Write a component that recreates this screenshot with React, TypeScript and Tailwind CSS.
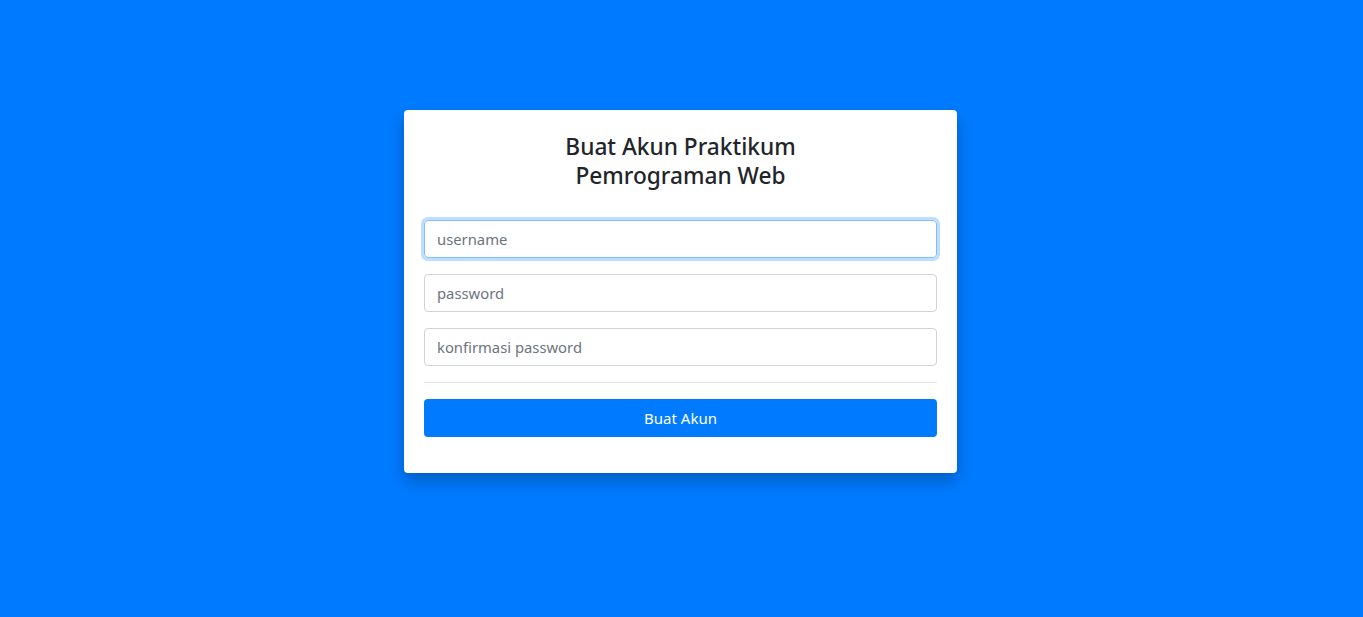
import React from 'react'

const font = { fontFamily: '"Noto Sans", "Open Sans", sans-serif' }

const App = () => {
    return (
        <div className="w-full h-[617px] bg-[#007bff] flex justify-center pt-[110px] pr-[2px]" style={font}>
            <div className="w-[553px] h-[363px] bg-white rounded-[4px] shadow-[0_8px_16px_rgba(0,0,0,0.25)] px-5 pt-[22px]">
                <h4 className="text-center text-[22.7px] leading-[29px] font-medium text-[#212529] mb-[30px]">
                    Buat Akun Praktikum
                    <br />
                    Pemrograman Web
                </h4>
                <form className="flex flex-col" onSubmit={(e) => e.preventDefault()}>
                    <input
                        type="text"
                        placeholder="username"
                        className="h-[38px] w-full px-3 text-[14.8px] text-[#495057] placeholder:text-[#6c757d] border border-[#80bdff] rounded-[4px] outline-none shadow-[0_0_0_3px_rgba(0,123,255,0.25)] mb-4"
                    />
                    <input
                        type="password"
                        placeholder="password"
                        className="h-[38px] w-full px-3 text-[14.8px] text-[#495057] placeholder:text-[#6c757d] border border-[#ced4da] rounded-[4px] outline-none mb-4"
                    />
                    <input
                        type="password"
                        placeholder="konfirmasi password"
                        className="h-[38px] w-full px-3 text-[14.8px] text-[#495057] placeholder:text-[#6c757d] border border-[#ced4da] rounded-[4px] outline-none mb-4"
                    />
                    <hr className="border-0 border-t border-[#e5e5e5] mb-4" />
                    <button
                        type="submit"
                        className="h-[38px] w-full bg-[#007bff] text-white text-[15px] rounded-[4px]"
                    >
                        Buat Akun
                    </button>
                </form>
            </div>
        </div>
    )
}

export default App
